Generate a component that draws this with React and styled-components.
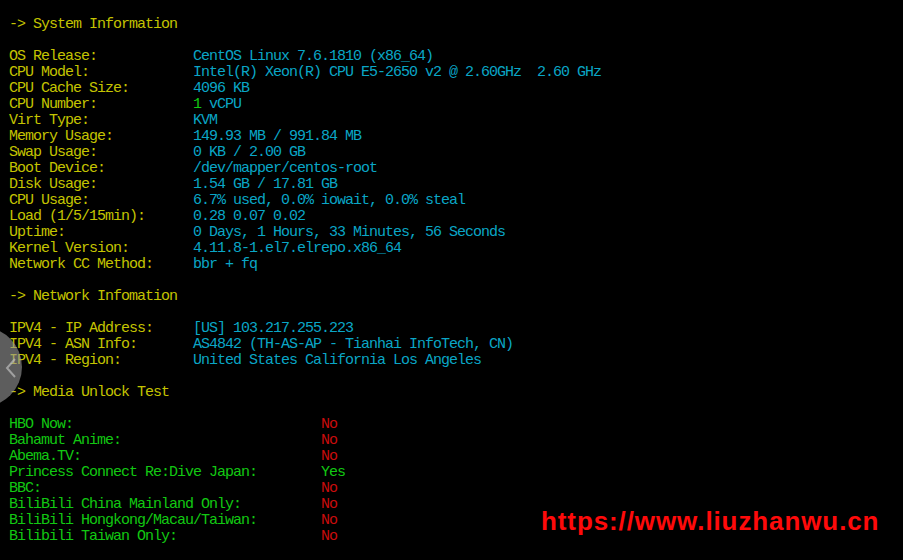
import React from 'react';
import styled, { createGlobalStyle } from 'styled-components';

const GlobalStyle = createGlobalStyle`
  html, body {
    margin: 0;
    padding: 0;
    background: #000;
  }
`;

const YELLOW = '#c4c400';
const CYAN = '#0aa6c6';
const GREEN = '#12c812';
const RED = '#c80c0c';

const Screen = styled.div`
  position: relative;
  width: 903px;
  height: 560px;
  overflow: hidden;
  background: #000;
  padding: 17px 0 0 9px;
  box-sizing: border-box;
  font-family: 'Liberation Mono', 'DejaVu Sans Mono', monospace;
  font-size: 15px;
  letter-spacing: -1px;
  line-height: 16px;
  white-space: pre;
`;

const Line = styled.div`
  display: flex;
  height: 16px;
  color: ${YELLOW};
`;

const Label = styled.span`
  width: ${p => p.$w}px;
  flex: none;
  color: ${p => p.$color || YELLOW};
`;

const Value = styled.span`
  color: ${p => p.$color || CYAN};
`;

const Blank = styled.div`
  height: 16px;
`;

const SideButton = styled.div`
  position: absolute;
  left: -58px;
  top: 327px;
  width: 80px;
  height: 80px;
  border-radius: 50%;
  background: rgba(150, 150, 150, 0.62);
`;

const Chevron = styled.svg`
  position: absolute;
  left: 4px;
  top: 357px;
`;

const Watermark = styled.div`
  position: absolute;
  left: 541px;
  top: 504px;
  font-family: 'Liberation Sans', Arial, sans-serif;
  font-weight: 700;
  font-size: 26px;
  letter-spacing: 0.9px;
  line-height: 34px;
  color: #ff0a0a;
`;

const sys = [
  ['OS Release:', 'CentOS Linux 7.6.1810 (x86_64)'],
  ['CPU Model:', 'Intel(R) Xeon(R) CPU E5-2650 v2 @ 2.60GHz  2.60 GHz'],
  ['CPU Cache Size:', '4096 KB'],
  ['CPU Number:', <><Value $color={GREEN}>1</Value> vCPU</>],
  ['Virt Type:', 'KVM'],
  ['Memory Usage:', '149.93 MB / 991.84 MB'],
  ['Swap Usage:', '0 KB / 2.00 GB'],
  ['Boot Device:', '/dev/mapper/centos-root'],
  ['Disk Usage:', '1.54 GB / 17.81 GB'],
  ['CPU Usage:', '6.7% used, 0.0% iowait, 0.0% steal'],
  ['Load (1/5/15min):', '0.28 0.07 0.02'],
  ['Uptime:', '0 Days, 1 Hours, 33 Minutes, 56 Seconds'],
  ['Kernel Version:', '4.11.8-1.el7.elrepo.x86_64'],
  ['Network CC Method:', 'bbr + fq'],
];

const net = [
  ['IPV4 - IP Address:', '[US] 103.217.255.223'],
  ['IPV4 - ASN Info:', 'AS4842 (TH-AS-AP - Tianhai InfoTech, CN)'],
  ['IPV4 - Region:', 'United States California Los Angeles'],
];

const media = [
  ['HBO Now:', 'No'],
  ['Bahamut Anime:', 'No'],
  ['Abema.TV:', 'No'],
  ['Princess Connect Re:Dive Japan:', 'Yes'],
  ['BBC:', 'No'],
  ['BiliBili China Mainland Only:', 'No'],
  ['BiliBili Hongkong/Macau/Taiwan:', 'No'],
  ['Bilibili Taiwan Only:', 'No'],
];

const Rows = ({ rows }) =>
  rows.map(([k, v]) => (
    <Line key={k}>
      <Label $w={184}>{k}</Label>
      <Value>{v}</Value>
    </Line>
  ));

export default function App() {
  return (
    <>
      <GlobalStyle />
      <Screen>
        <Line>-&gt; System Information</Line>
        <Blank />
        <Rows rows={sys} />
        <Blank />
        <Line>-&gt; Network Infomation</Line>
        <Blank />
        <Rows rows={net} />
        <Blank />
        <Line>-&gt; Media Unlock Test</Line>
        <Blank />
        {media.map(([k, v]) => (
          <Line key={k}>
            <Label $w={312} $color={GREEN}>{k}</Label>
            <Value $color={v === 'Yes' ? GREEN : RED}>{v}</Value>
          </Line>
        ))}
        <SideButton />
        <Chevron width="14" height="22" viewBox="0 0 14 22">
          <path d="M11 2 L3 11 L11 20" fill="none" stroke="rgba(190,190,190,0.7)" strokeWidth="2" />
        </Chevron>
        <Watermark>https://www.liuzhanwu.cn</Watermark>
      </Screen>
    </>
  );
}
